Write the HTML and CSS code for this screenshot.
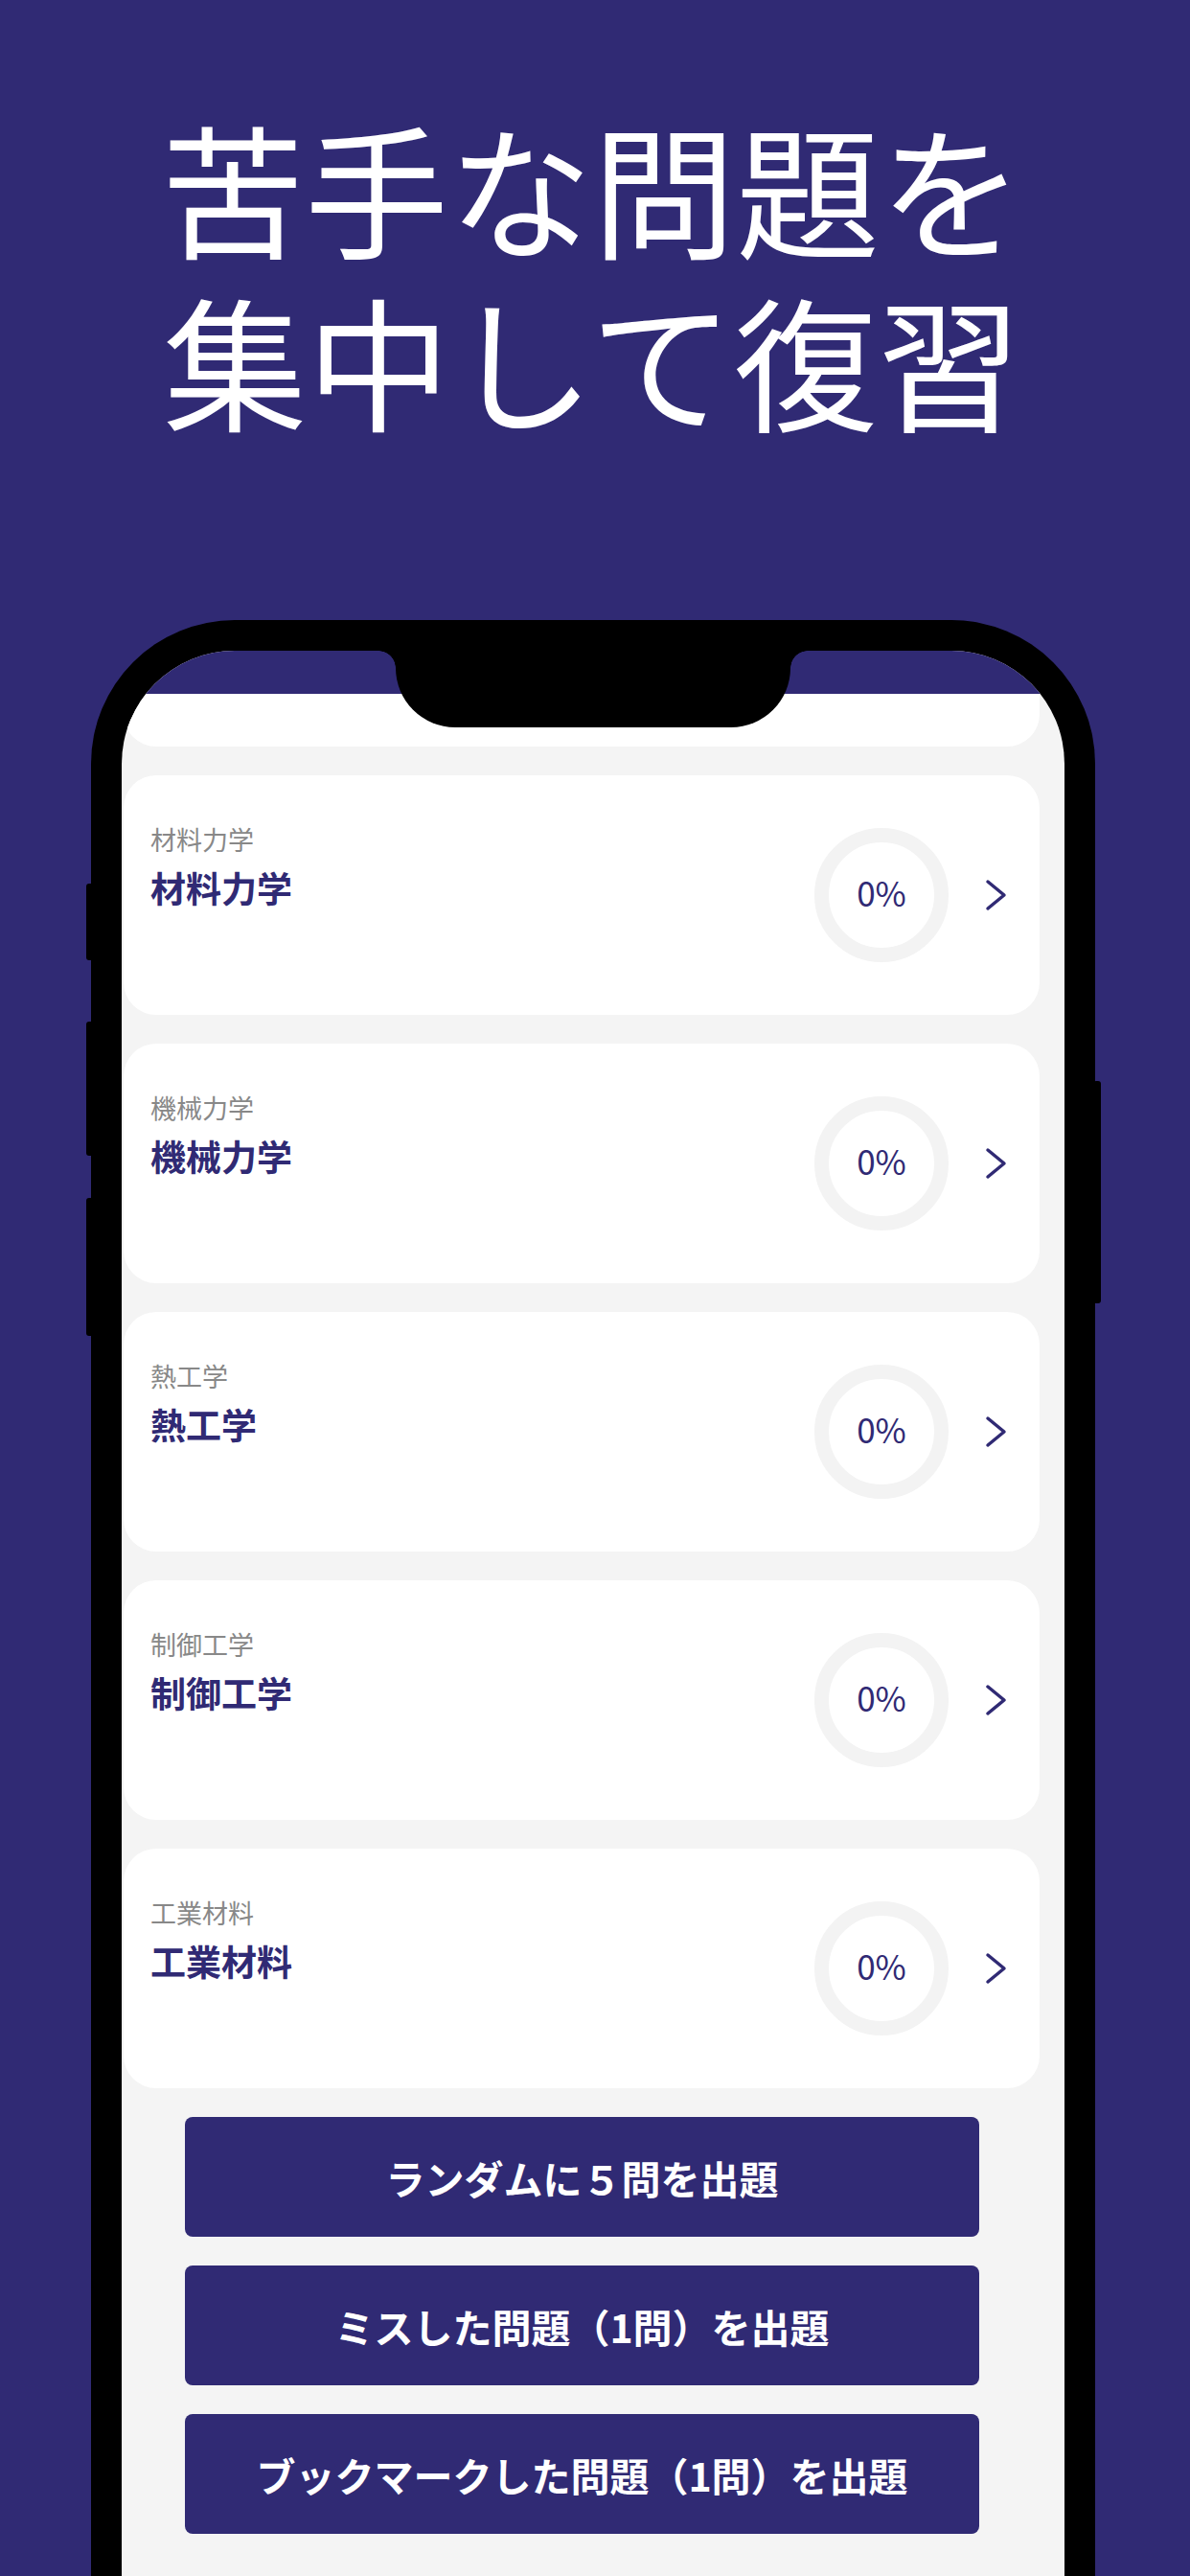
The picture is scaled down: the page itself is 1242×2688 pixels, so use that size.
FILE: index.html
```html
<!DOCTYPE html>
<html lang="ja">
<head>
<meta charset="UTF-8">
<meta name="viewport" content="width=device-width, initial-scale=1.0">
<title>苦手な問題を集中して復習</title>
<link rel="stylesheet" href="styles.css">
</head>
<body>
  <h1 class="headline"><span class="headline-line">苦手な問題を</span><span class="headline-line">集中して復習</span></h1>

  <div class="phone">
    <span class="side-btn side-left btn-mute"></span>
    <span class="side-btn side-left btn-vol-up"></span>
    <span class="side-btn side-left btn-vol-down"></span>
    <span class="side-btn side-right btn-power"></span>

    <div class="screen">
      <div class="notch"></div>
      <div class="status-bar"></div>

      <div class="content">
        <div class="card card-cut"></div>

        <div class="card">
          <div class="card-text">
            <p class="card-sub">材料力学</p>
            <p class="card-title">材料力学</p>
          </div>
          <div class="progress">0%</div>
          <svg class="chevron" width="24" height="34" viewBox="0 0 24 34"><polyline points="3,3 20,17 3,31" fill="none" stroke="#302a74" stroke-width="3.5" stroke-linecap="round" stroke-linejoin="round"/></svg>
        </div>

        <div class="card">
          <div class="card-text">
            <p class="card-sub">機械力学</p>
            <p class="card-title">機械力学</p>
          </div>
          <div class="progress">0%</div>
          <svg class="chevron" width="24" height="34" viewBox="0 0 24 34"><polyline points="3,3 20,17 3,31" fill="none" stroke="#302a74" stroke-width="3.5" stroke-linecap="round" stroke-linejoin="round"/></svg>
        </div>

        <div class="card">
          <div class="card-text">
            <p class="card-sub">熱工学</p>
            <p class="card-title">熱工学</p>
          </div>
          <div class="progress">0%</div>
          <svg class="chevron" width="24" height="34" viewBox="0 0 24 34"><polyline points="3,3 20,17 3,31" fill="none" stroke="#302a74" stroke-width="3.5" stroke-linecap="round" stroke-linejoin="round"/></svg>
        </div>

        <div class="card">
          <div class="card-text">
            <p class="card-sub">制御工学</p>
            <p class="card-title">制御工学</p>
          </div>
          <div class="progress">0%</div>
          <svg class="chevron" width="24" height="34" viewBox="0 0 24 34"><polyline points="3,3 20,17 3,31" fill="none" stroke="#302a74" stroke-width="3.5" stroke-linecap="round" stroke-linejoin="round"/></svg>
        </div>

        <div class="card">
          <div class="card-text">
            <p class="card-sub">工業材料</p>
            <p class="card-title">工業材料</p>
          </div>
          <div class="progress">0%</div>
          <svg class="chevron" width="24" height="34" viewBox="0 0 24 34"><polyline points="3,3 20,17 3,31" fill="none" stroke="#302a74" stroke-width="3.5" stroke-linecap="round" stroke-linejoin="round"/></svg>
        </div>

        <div class="actions">
          <button class="action">ランダムに５問を出題</button>
          <button class="action">ミスした問題（1問）を出題</button>
          <button class="action">ブックマークした問題（1問）を出題</button>
        </div>
      </div>
    </div>
  </div>
</body>
</html>
```

FILE: styles.css
```css
body {
    margin: 0;
    height: 2688px;
    overflow: hidden;
    background-color: #302a74;
    font-family: "Noto Sans CJK JP", "Noto Sans", sans-serif;
}
.headline {
    box-sizing: border-box;
    height: 647px;
    margin: 0;
    padding: 104px 6px 0 0;
    color: #fff;
    font-size: 150px;
    font-weight: 400;
    line-height: 180px;
    text-align: center;
}
.headline-line {
    display: block;
}

/* phone frame */
.phone {
    position: relative;
    width: 984px;
    height: 2100px;
    margin-left: 95px;
    padding: 32px 32px 0;
    background: #000;
    border-radius: 150px 150px 0 0;
}
.side-btn {
    position: absolute;
    width: 8px;
    background: #000;
    border-radius: 3px;
}
.side-left {
    left: -5px;
}
.side-right {
    right: -6px;
}
.btn-mute {
    top: 275px;
    height: 80px;
}
.btn-vol-up {
    top: 419px;
    height: 140px;
}
.btn-vol-down {
    top: 603px;
    height: 144px;
}
.btn-power {
    top: 481px;
    height: 232px;
}
.screen {
    position: relative;
    height: 100%;
    overflow: hidden;
    background: #f4f4f4;
    border-radius: 118px 118px 0 0;
}
.notch {
    position: absolute;
    top: 0;
    left: 286px;
    width: 412px;
    height: 80px;
    background: #000;
    border-radius: 0 0 62px 62px;
    z-index: 2;
}
.notch::before,
.notch::after {
    content: "";
    position: absolute;
    top: 0;
    width: 18px;
    height: 18px;
}
.notch::before {
    left: -18px;
    background: radial-gradient(circle at 0 100%, transparent 17.5px, #000 18px);
}
.notch::after {
    right: -18px;
    background: radial-gradient(circle at 100% 100%, transparent 17.5px, #000 18px);
}
.status-bar {
    height: 45px;
    background: #302a74;
}

/* list */
.content {
    display: flex;
    flex-direction: column;
    gap: 30px;
    width: 956px;
    margin-left: 2px;
}
.card {
    display: flex;
    align-items: center;
    height: 250px;
    background: #fff;
    border-radius: 34px;
}
.card-cut {
    height: 55px;
    border-radius: 0 0 34px 34px;
}
.card-text {
    flex: 1;
    align-self: flex-start;
    padding: 53px 0 0 28px;
}
.card-text p {
    margin: 0;
}
.card-sub {
    color: #888;
    font-size: 27px;
    line-height: 27px;
}
.card-title {
    margin-top: 19px !important;
    color: #302a74;
    font-size: 37px;
    font-weight: 700;
    line-height: 37px;
}
.progress {
    display: flex;
    align-items: center;
    justify-content: center;
    box-sizing: border-box;
    width: 140px;
    height: 140px;
    padding-bottom: 8px;
    border: 15px solid #f3f3f3;
    border-radius: 50%;
    color: #302a74;
    font-size: 35px;
    line-height: 1;
}
.chevron {
    margin: 0 33px 0 38px;
}

.actions {
    display: flex;
    flex-direction: column;
    gap: 30px;
    padding: 0 63px 0 64px;
}
.action {
    height: 125px;
    border: none;
    border-radius: 8px;
    background: #302a74;
    color: #fff;
    font-family: "Noto Sans CJK JP", sans-serif;
    font-size: 41px;
    font-weight: 700;
}
```
